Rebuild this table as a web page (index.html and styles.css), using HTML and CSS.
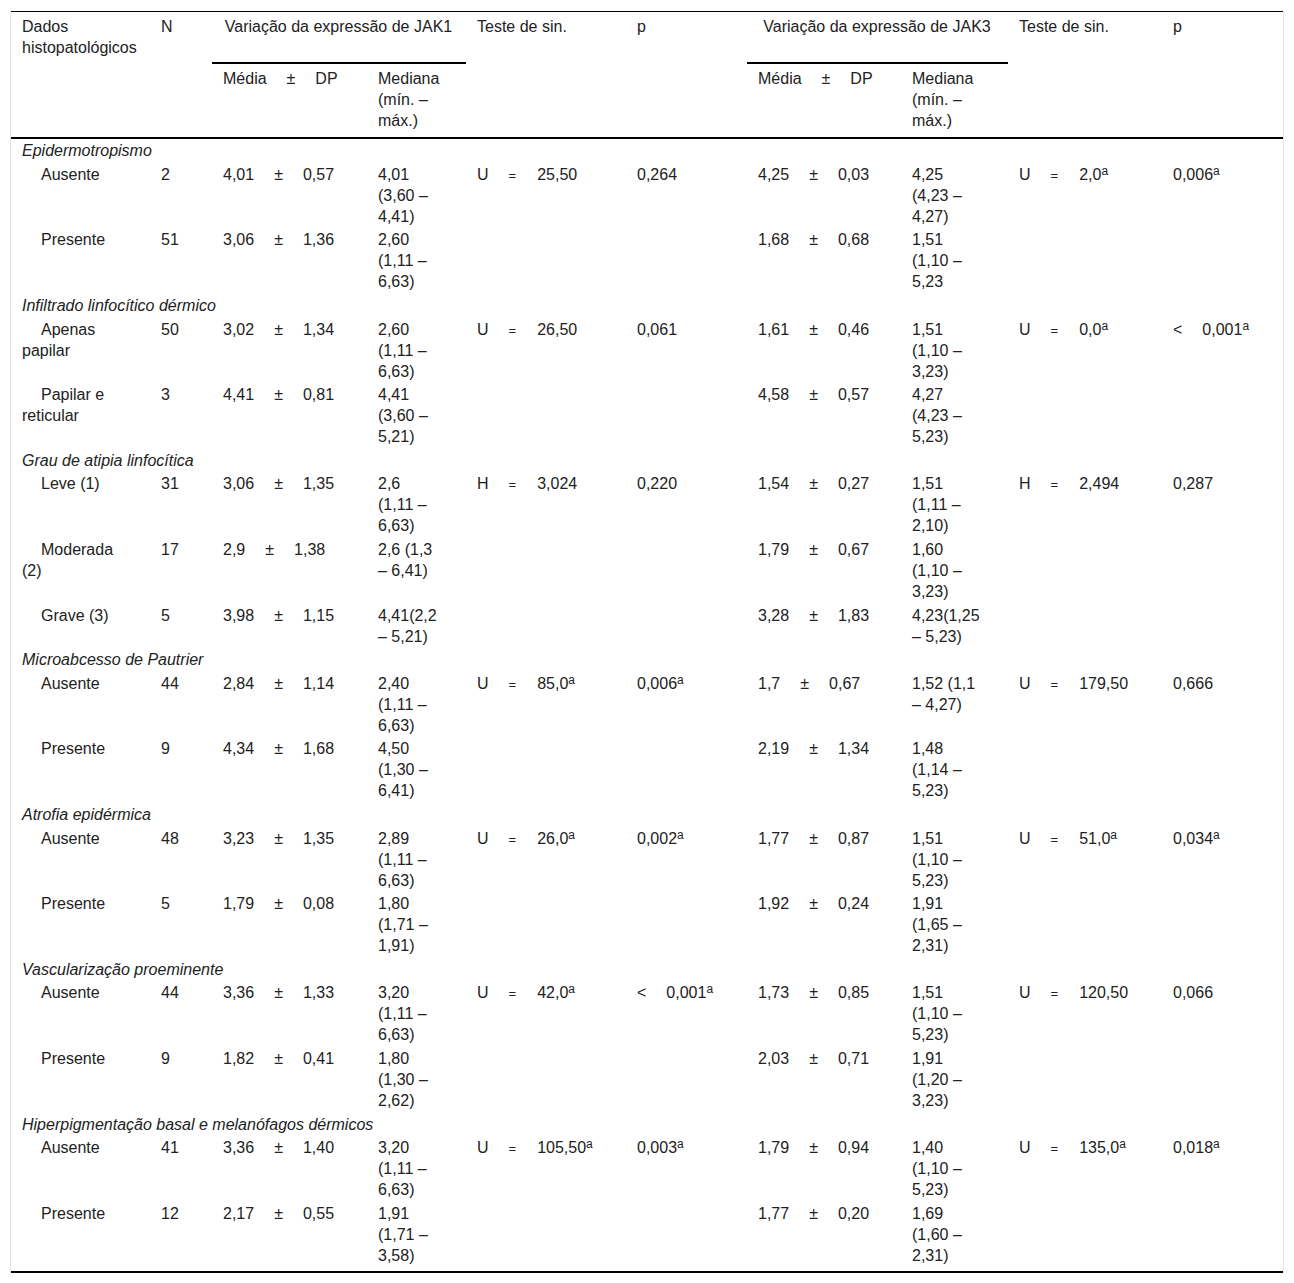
FILE: index.html
```html
<!DOCTYPE html>
<html lang="pt">
<head>
<meta charset="utf-8">
<title>Tabela JAK1 / JAK3</title>
<link rel="stylesheet" href="styles.css">
</head>
<body>
<div class="wrap">
<table class="tbl">
<colgroup>
<col class="w-c1"><col class="w-n"><col class="w-m1"><col class="w-md1"><col class="w-t1"><col class="w-p1"><col class="w-m3"><col class="w-md3"><col class="w-t3"><col class="w-p3">
</colgroup>
<thead>
<tr class="h1">
<th class="c1">Dados histopatológicos</th>
<th>N</th>
<th colspan="2" class="grp">Variação da expressão de JAK1</th>
<th>Teste de sin.</th>
<th>p</th>
<th colspan="2" class="grp">Variação da expressão de JAK3</th>
<th>Teste de sin.</th>
<th>p</th>
</tr>
<tr class="h2">
<th class="c1"></th>
<th></th>
<th>Média<span class="pm">±</span>DP</th>
<th class="med1">Mediana (mín. – máx.)</th>
<th></th>
<th></th>
<th>Média<span class="pm">±</span>DP</th>
<th class="med3">Mediana (mín. – máx.)</th>
<th></th>
<th></th>
</tr>
</thead>
<tbody>
<tr class="cat"><td colspan="10">Epidermotropismo</td></tr>
<tr class="sub">
<td class="c1">Ausente</td><td>2</td><td>4,01<span class="pm">±</span>0,57</td><td class="med1">4,01 (3,60 – 4,41)</td><td>U<span class="eq">=</span>25,50</td><td>0,264</td><td>4,25<span class="pm">±</span>0,03</td><td class="med3">4,25 (4,23 – 4,27)</td><td>U<span class="eq">=</span>2,0<sup>a</sup></td><td>0,006<sup>a</sup></td>
</tr>
<tr class="sub">
<td class="c1">Presente</td><td>51</td><td>3,06<span class="pm">±</span>1,36</td><td class="med1">2,60 (1,11 – 6,63)</td><td></td><td></td><td>1,68<span class="pm">±</span>0,68</td><td class="med3">1,51 (1,10 – 5,23</td><td></td><td></td>
</tr>
<tr class="cat"><td colspan="10">Infiltrado linfocítico dérmico</td></tr>
<tr class="sub">
<td class="c1">Apenas papilar</td><td>50</td><td>3,02<span class="pm">±</span>1,34</td><td class="med1">2,60 (1,11 – 6,63)</td><td>U<span class="eq">=</span>26,50</td><td>0,061</td><td>1,61<span class="pm">±</span>0,46</td><td class="med3">1,51 (1,10 – 3,23)</td><td>U<span class="eq">=</span>0,0<sup>a</sup></td><td><span class="lt">&lt;</span>0,001<sup>a</sup></td>
</tr>
<tr class="sub">
<td class="c1">Papilar e reticular</td><td>3</td><td>4,41<span class="pm">±</span>0,81</td><td class="med1">4,41 (3,60 – 5,21)</td><td></td><td></td><td>4,58<span class="pm">±</span>0,57</td><td class="med3">4,27 (4,23 – 5,23)</td><td></td><td></td>
</tr>
<tr class="cat"><td colspan="10">Grau de atipia linfocítica</td></tr>
<tr class="sub">
<td class="c1">Leve (1)</td><td>31</td><td>3,06<span class="pm">±</span>1,35</td><td class="med1">2,6 (1,11 – 6,63)</td><td>H<span class="eq">=</span>3,024</td><td>0,220</td><td>1,54<span class="pm">±</span>0,27</td><td class="med3">1,51 (1,11 – 2,10)</td><td>H<span class="eq">=</span>2,494</td><td>0,287</td>
</tr>
<tr class="sub">
<td class="c1">Moderada (2)</td><td>17</td><td>2,9<span class="pm">±</span>1,38</td><td class="med1">2,6 (1,3 – 6,41)</td><td></td><td></td><td>1,79<span class="pm">±</span>0,67</td><td class="med3">1,60 (1,10 – 3,23)</td><td></td><td></td>
</tr>
<tr class="sub">
<td class="c1">Grave (3)</td><td>5</td><td>3,98<span class="pm">±</span>1,15</td><td class="med1">4,41(2,2 – 5,21)</td><td></td><td></td><td>3,28<span class="pm">±</span>1,83</td><td class="med3">4,23(1,25 – 5,23)</td><td></td><td></td>
</tr>
<tr class="cat"><td colspan="10">Microabcesso de Pautrier</td></tr>
<tr class="sub">
<td class="c1">Ausente</td><td>44</td><td>2,84<span class="pm">±</span>1,14</td><td class="med1">2,40 (1,11 – 6,63)</td><td>U<span class="eq">=</span>85,0<sup>a</sup></td><td>0,006<sup>a</sup></td><td>1,7<span class="pm">±</span>0,67</td><td class="med3">1,52 (1,1 – 4,27)</td><td>U<span class="eq">=</span>179,50</td><td>0,666</td>
</tr>
<tr class="sub">
<td class="c1">Presente</td><td>9</td><td>4,34<span class="pm">±</span>1,68</td><td class="med1">4,50 (1,30 – 6,41)</td><td></td><td></td><td>2,19<span class="pm">±</span>1,34</td><td class="med3">1,48 (1,14 – 5,23)</td><td></td><td></td>
</tr>
<tr class="cat"><td colspan="10">Atrofia epidérmica</td></tr>
<tr class="sub">
<td class="c1">Ausente</td><td>48</td><td>3,23<span class="pm">±</span>1,35</td><td class="med1">2,89 (1,11 – 6,63)</td><td>U<span class="eq">=</span>26,0<sup>a</sup></td><td>0,002<sup>a</sup></td><td>1,77<span class="pm">±</span>0,87</td><td class="med3">1,51 (1,10 – 5,23)</td><td>U<span class="eq">=</span>51,0<sup>a</sup></td><td>0,034<sup>a</sup></td>
</tr>
<tr class="sub">
<td class="c1">Presente</td><td>5</td><td>1,79<span class="pm">±</span>0,08</td><td class="med1">1,80 (1,71 – 1,91)</td><td></td><td></td><td>1,92<span class="pm">±</span>0,24</td><td class="med3">1,91 (1,65 – 2,31)</td><td></td><td></td>
</tr>
<tr class="cat"><td colspan="10">Vascularização proeminente</td></tr>
<tr class="sub">
<td class="c1">Ausente</td><td>44</td><td>3,36<span class="pm">±</span>1,33</td><td class="med1">3,20 (1,11 – 6,63)</td><td>U<span class="eq">=</span>42,0<sup>a</sup></td><td><span class="lt">&lt;</span>0,001<sup>a</sup></td><td>1,73<span class="pm">±</span>0,85</td><td class="med3">1,51 (1,10 – 5,23)</td><td>U<span class="eq">=</span>120,50</td><td>0,066</td>
</tr>
<tr class="sub">
<td class="c1">Presente</td><td>9</td><td>1,82<span class="pm">±</span>0,41</td><td class="med1">1,80 (1,30 – 2,62)</td><td></td><td></td><td>2,03<span class="pm">±</span>0,71</td><td class="med3">1,91 (1,20 – 3,23)</td><td></td><td></td>
</tr>
<tr class="cat"><td colspan="10">Hiperpigmentação basal e melanófagos dérmicos</td></tr>
<tr class="sub">
<td class="c1">Ausente</td><td>41</td><td>3,36<span class="pm">±</span>1,40</td><td class="med1">3,20 (1,11 – 6,63)</td><td>U<span class="eq">=</span>105,50<sup>a</sup></td><td>0,003<sup>a</sup></td><td>1,79<span class="pm">±</span>0,94</td><td class="med3">1,40 (1,10 – 5,23)</td><td>U<span class="eq">=</span>135,0<sup>a</sup></td><td>0,018<sup>a</sup></td>
</tr>
<tr class="sub last">
<td class="c1">Presente</td><td>12</td><td>2,17<span class="pm">±</span>0,55</td><td class="med1">1,91 (1,71 – 3,58)</td><td></td><td></td><td>1,77<span class="pm">±</span>0,20</td><td class="med3">1,69 (1,60 – 2,31)</td><td></td><td></td>
</tr>
</tbody>
</table>
</div>
</body>
</html>
```

FILE: styles.css
```css
body {
  margin: 0;
  background: #ffffff;
  font-family: "Liberation Sans", Arial, sans-serif;
  font-size: 16px;
  color: #222222;
}

.wrap {
  margin: 11px 0 0 10px;
  width: 1272px;
  border-left: 1px solid #e4e4e4;
  border-right: 1px solid #e4e4e4;
}

.tbl {
  width: 1272px;
  table-layout: fixed;
  border-collapse: separate;
  border-spacing: 0;
  border-top: 1px solid #000000;
  border-bottom: 2px solid #000000;
  line-height: 21px;
}

.w-c1 { width: 139px; }
.w-n { width: 62px; }
.w-m1 { width: 155px; }
.w-md1 { width: 99px; }
.w-t1 { width: 160px; }
.w-p1 { width: 121px; }
.w-m3 { width: 154px; }
.w-md3 { width: 107px; }
.w-t3 { width: 154px; }
.w-p3 { width: 121px; }

.tbl th,
.tbl td {
  padding: 1.3px 12px 1.3px 11px;
  text-align: left;
  vertical-align: top;
  font-weight: normal;
}

.tbl thead th {
  padding-top: 4px;
  padding-bottom: 6px;
}

.tbl thead .grp {
  text-align: center;
  border-bottom: 2px solid #000000;
}

.tbl thead .h2 th {
  border-bottom: 2px solid #000000;
}

.tbl .c1 { padding-right: 18px; }
.tbl td.med1 { padding-right: 28px; }
.tbl th.med1 { padding-right: 22px; }
.tbl .med3 { padding-right: 26px; }

.cat td {
  font-style: italic;
}

.sub td.c1 {
  text-indent: 19px;
}

.sub.last td {
  padding-bottom: 5.3px;
}

.pm {
  margin: 0 20px;
}

.eq {
  font-size: 13px;
  margin: 0 21px 0 20px;
}

.lt {
  margin-right: 20px;
}

sup {
  font-size: 12px;
  line-height: 0;
  vertical-align: 5px;
}
```
